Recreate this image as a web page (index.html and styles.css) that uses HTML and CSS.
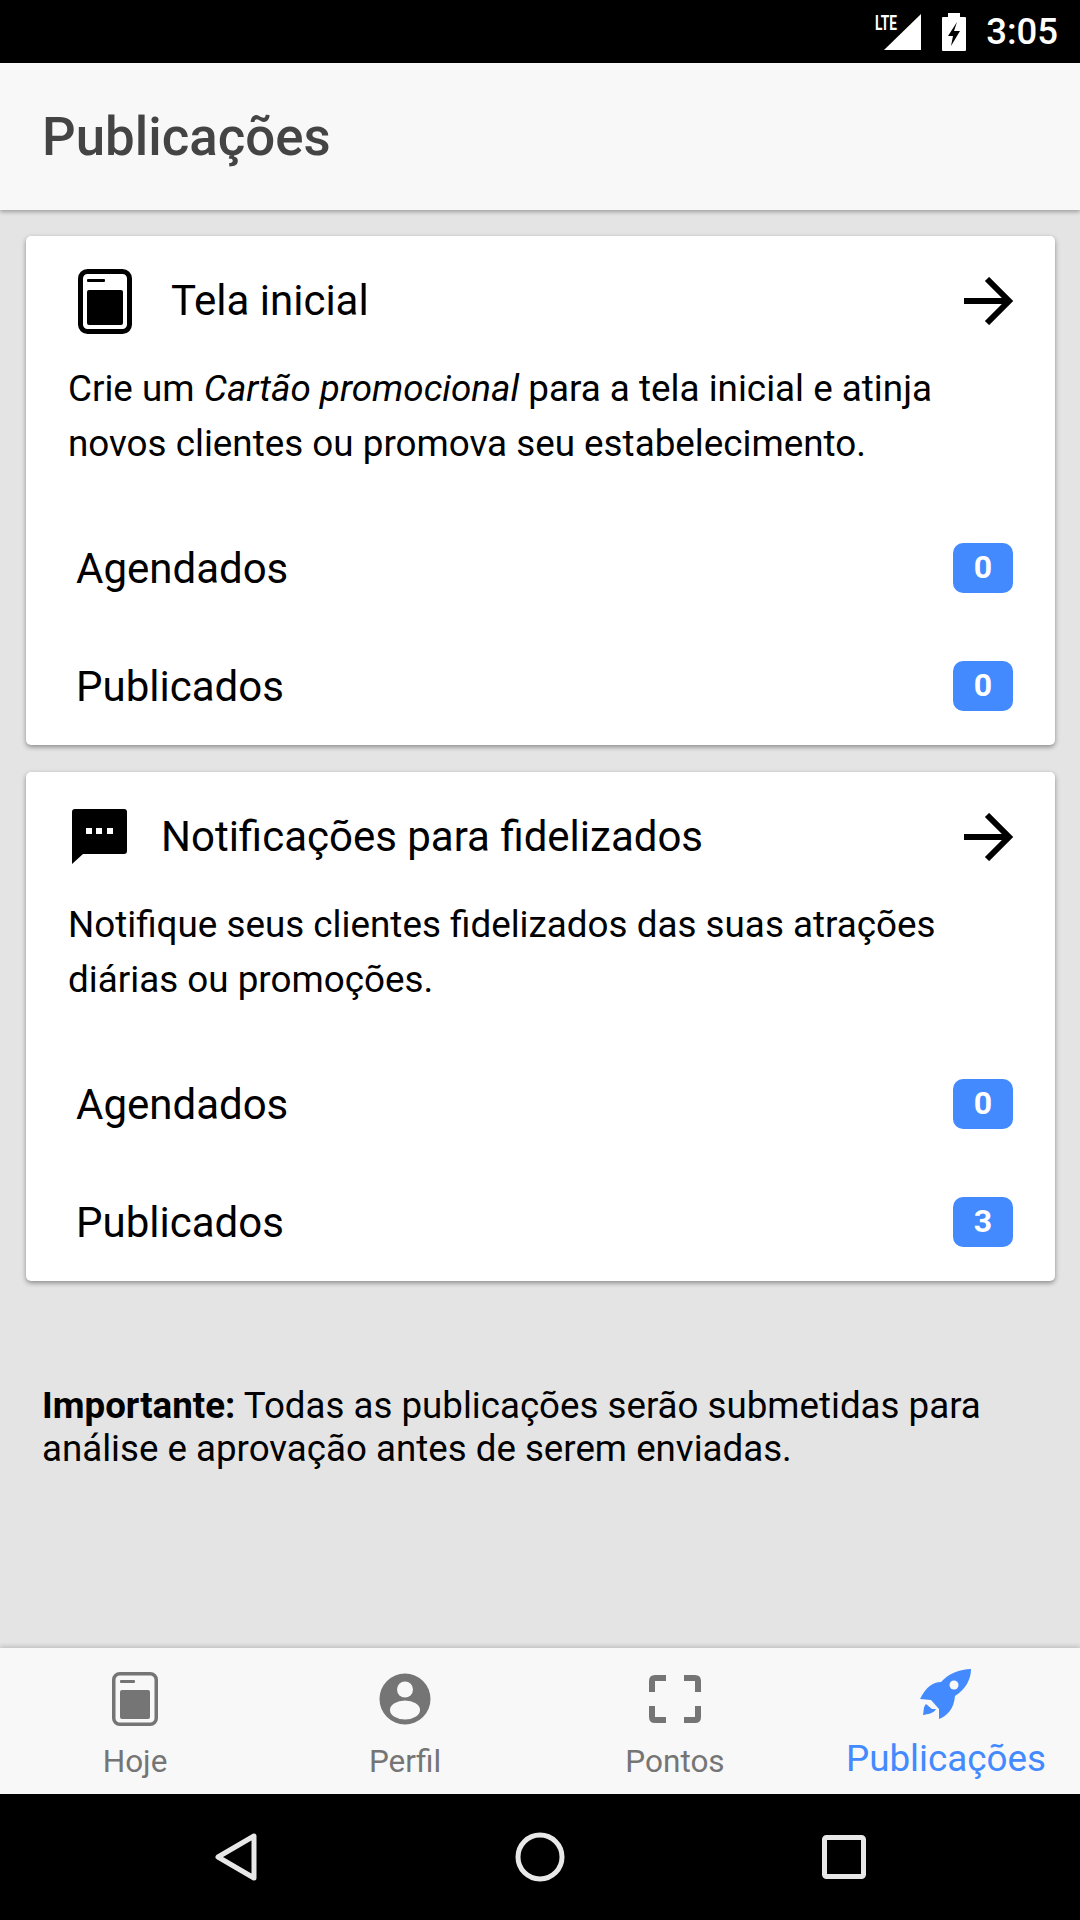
FILE: index.html
```html
<!DOCTYPE html>
<html lang="pt-BR">
<head>
  <meta charset="UTF-8" />
  <meta name="viewport" content="width=device-width, initial-scale=1.0"/>
  <title>Publicações</title>
  <link rel="stylesheet" href="styles.css">
</head>
<body>
  <div class="status-bar">
    <span class="lte">LTE</span>
    <svg class="signal" width="37" height="36" viewBox="0 0 37 36"><path d="M37 0V36H0z" fill="#fff"/></svg>
    <svg class="battery" width="24" height="38" viewBox="0 0 24 38"><path d="M6 0h12v4h5a1 1 0 0 1 1 1v32a1 1 0 0 1-1 1H1a1 1 0 0 1-1-1V5a1 1 0 0 1 1-1h5z" fill="#fff"/><path d="M15 9L6 23h5l-2 10 9-15h-6l3-9z" fill="#000"/></svg>
    <span class="clock">3:05</span>
  </div>

  <header class="app-header">
    <h1>Publicações</h1>
  </header>

  <main class="content">
    <section class="card">
      <div class="card-head">
        <svg class="card-icon-home" width="54" height="65" viewBox="0 0 54 65">
          <rect x="2.5" y="2.5" width="49" height="60" rx="7" fill="none" stroke="#000" stroke-width="5"/>
          <rect x="9" y="10" width="18" height="3" rx="1" fill="#000"/>
          <rect x="9" y="21" width="36" height="35" rx="2" fill="#000"/>
        </svg>
        <h2>Tela inicial</h2>
        <svg class="arrow" width="50" height="48" viewBox="0 0 50 48"><path d="M0 24H46M23 2L45 24L23 46" fill="none" stroke="#000" stroke-width="6"/></svg>
      </div>
      <p class="card-text">Crie um <em>Cartão promocional</em> para a tela inicial e atinja novos clientes ou promova seu estabelecimento.</p>
      <div class="row"><span>Agendados</span><span class="badge">0</span></div>
      <div class="row"><span>Publicados</span><span class="badge">0</span></div>
    </section>

    <section class="card">
      <div class="card-head">
        <svg class="card-icon-msg" width="56" height="56" viewBox="0 0 56 56">
          <path d="M3 0H52a3 3 0 0 1 3 3V42a3 3 0 0 1-3 3H11L0 55V3a3 3 0 0 1 3-3z" fill="#000"/>
          <rect x="14" y="19" width="6" height="6" fill="#fff"/>
          <rect x="24" y="19" width="6" height="6" fill="#fff"/>
          <rect x="35" y="19" width="6" height="6" fill="#fff"/>
        </svg>
        <h2>Notificações para fidelizados</h2>
        <svg class="arrow" width="50" height="48" viewBox="0 0 50 48"><path d="M0 24H46M23 2L45 24L23 46" fill="none" stroke="#000" stroke-width="6"/></svg>
      </div>
      <p class="card-text">Notifique seus clientes fidelizados das suas atrações diárias ou promoções.</p>
      <div class="row"><span>Agendados</span><span class="badge">0</span></div>
      <div class="row"><span>Publicados</span><span class="badge">3</span></div>
    </section>

    <p class="note"><strong>Importante:</strong> Todas as publicações serão submetidas para análise e aprovação antes de serem enviadas.</p>
  </main>

  <nav class="tabs">
    <div class="tab">
      <div class="tab-icon">
        <svg width="46" height="54" viewBox="0 0 46 54">
          <rect x="1.75" y="1.75" width="42.5" height="50.5" rx="6" fill="none" stroke="#757575" stroke-width="3.5"/>
          <rect x="8" y="8" width="15" height="3" rx="1" fill="#757575"/>
          <rect x="8" y="18" width="30" height="29" rx="2" fill="#757575"/>
        </svg>
      </div>
      <span>Hoje</span>
    </div>
    <div class="tab">
      <div class="tab-icon">
        <svg width="52" height="52" viewBox="0 0 52 52">
          <circle cx="26" cy="26" r="25.5" fill="#757575"/>
          <circle cx="26" cy="16.5" r="8" fill="#f8f8f8"/>
          <ellipse cx="26" cy="37" rx="15" ry="9.5" fill="#f8f8f8"/>
        </svg>
      </div>
      <span>Perfil</span>
    </div>
    <div class="tab">
      <div class="tab-icon">
        <svg width="52" height="48" viewBox="0 0 52 48">
          <path d="M17 3H6Q3 3 3 6V17M35 3H46Q49 3 49 6V17M17 45H6Q3 45 3 42V31M35 45H46Q49 45 49 42V31" fill="none" stroke="#757575" stroke-width="6"/>
        </svg>
      </div>
      <span>Pontos</span>
    </div>
    <div class="tab active">
      <div class="tab-icon">
        <svg width="52" height="52" viewBox="0 0 52 52">
          <path d="M51 0C40 0 28 5 21 13C13 13 6 18 0 30L11 31L19 40L19 50C27 47 34 40 35 27C46 20 51 10 51 0Z" fill="#448aff"/>
          <circle cx="34" cy="16" r="4.5" fill="#f8f8f8"/>
          <path d="M6 35C3 38 4 42 3 46C8 45 13 45 16 40L12 40C10 38 8 37 6 35Z" fill="#448aff"/>
        </svg>
      </div>
      <span>Publicações</span>
    </div>
  </nav>

  <div class="nav-bar">
    <svg width="42" height="48" viewBox="0 0 42 48"><path d="M3 24L39 3V45z" fill="none" stroke="#e8e8e8" stroke-width="5" stroke-linejoin="round"/></svg>
    <svg width="50" height="50" viewBox="0 0 50 50"><circle cx="25" cy="25" r="22" fill="none" stroke="#e8e8e8" stroke-width="5"/></svg>
    <svg width="44" height="44" viewBox="0 0 44 44"><rect x="2.5" y="2.5" width="39" height="39" rx="2" fill="none" stroke="#e8e8e8" stroke-width="5"/></svg>
  </div>
</body>
</html>
```

FILE: styles.css
```css
* {
  box-sizing: border-box;
  font-family: Roboto, sans-serif;
}

body {
  margin: 0;
  width: 1080px;
  height: 1920px;
  display: flex;
  flex-direction: column;
  background-color: #e4e4e4;
  color: #000;
}

.status-bar {
  height: 63px;
  background-color: #000;
  color: #fff;
  display: flex;
  align-items: center;
  justify-content: flex-end;
  padding-right: 22px;
  flex-shrink: 0;
}

.lte {
  width: 24px;
  margin-right: -15px;
  font-size: 21px;
  font-weight: 700;
  transform: translateY(-9px) scaleX(0.65);
  transform-origin: left center;
  white-space: nowrap;
}

.signal {
  margin: 0 21px 0 0;
}

.battery {
  margin-right: 20px;
}

.clock {
  font-size: 36.5px;
  font-weight: 500;
}

.app-header {
  height: 147px;
  background-color: #f8f8f8;
  box-shadow: 0 2px 4px rgba(0, 0, 0, 0.3);
  display: flex;
  align-items: center;
  padding-left: 42px;
  flex-shrink: 0;
  position: relative;
}

.app-header h1 {
  margin: 0;
  font-size: 52.8px;
  font-weight: 500;
  color: #444;
}

.content {
  flex: 1;
  padding: 26px 25px 0 26px;
}

.card {
  height: 509px;
  background-color: #fff;
  border-radius: 5px;
  box-shadow: 0 2px 5px rgba(0, 0, 0, 0.4);
  margin-bottom: 27px;
}

.card-head {
  height: 125px;
  display: flex;
  align-items: center;
  padding: 4px 41px 0 0;
}

.card-head h2 {
  flex: 1;
  margin: 0;
  font-size: 42px;
  font-weight: 400;
}

.card-icon-home {
  margin: 2px 39px 0 52px;
}

.card-icon-msg {
  margin: 0 33px 0 46px;
}

.card-text {
  margin: 0 0 38px;
  padding: 0 40px 0 42px;
  font-size: 36.8px;
  line-height: 55px;
  height: 110px;
}

.row {
  height: 118px;
  display: flex;
  align-items: center;
  justify-content: space-between;
  padding: 0 42px 0 50px;
  font-size: 42px;
}

.badge {
  width: 60px;
  height: 50px;
  padding-bottom: 2px;
  border-radius: 10px;
  background-color: #448aff;
  color: #fff;
  font-size: 32px;
  font-weight: 700;
  display: flex;
  align-items: center;
  justify-content: center;
}

.note {
  margin: 103px 0 0 16px;
  font-size: 36.7px;
  line-height: 43px;
}

.tabs {
  height: 146px;
  background-color: #f8f8f8;
  box-shadow: 0 -2px 4px rgba(0, 0, 0, 0.15);
  display: grid;
  grid-template-columns: repeat(4, 1fr);
  flex-shrink: 0;
}

.tab {
  display: flex;
  flex-direction: column;
  align-items: center;
  padding-top: 21px;
  color: #757575;
  font-size: 31.5px;
  line-height: 42px;
}

.tab-icon {
  height: 60px;
  margin-bottom: 12px;
  display: flex;
  align-items: center;
}

.tab.active {
  padding-left: 2px;
  color: #448aff;
  font-size: 36.8px;
  line-height: 36px;
}

.tab.active svg {
  margin-bottom: 8px;
}

.nav-bar {
  height: 126px;
  background-color: #000;
  display: flex;
  align-items: center;
  gap: 257.5px;
  padding-left: 215px;
  flex-shrink: 0;
}
```
